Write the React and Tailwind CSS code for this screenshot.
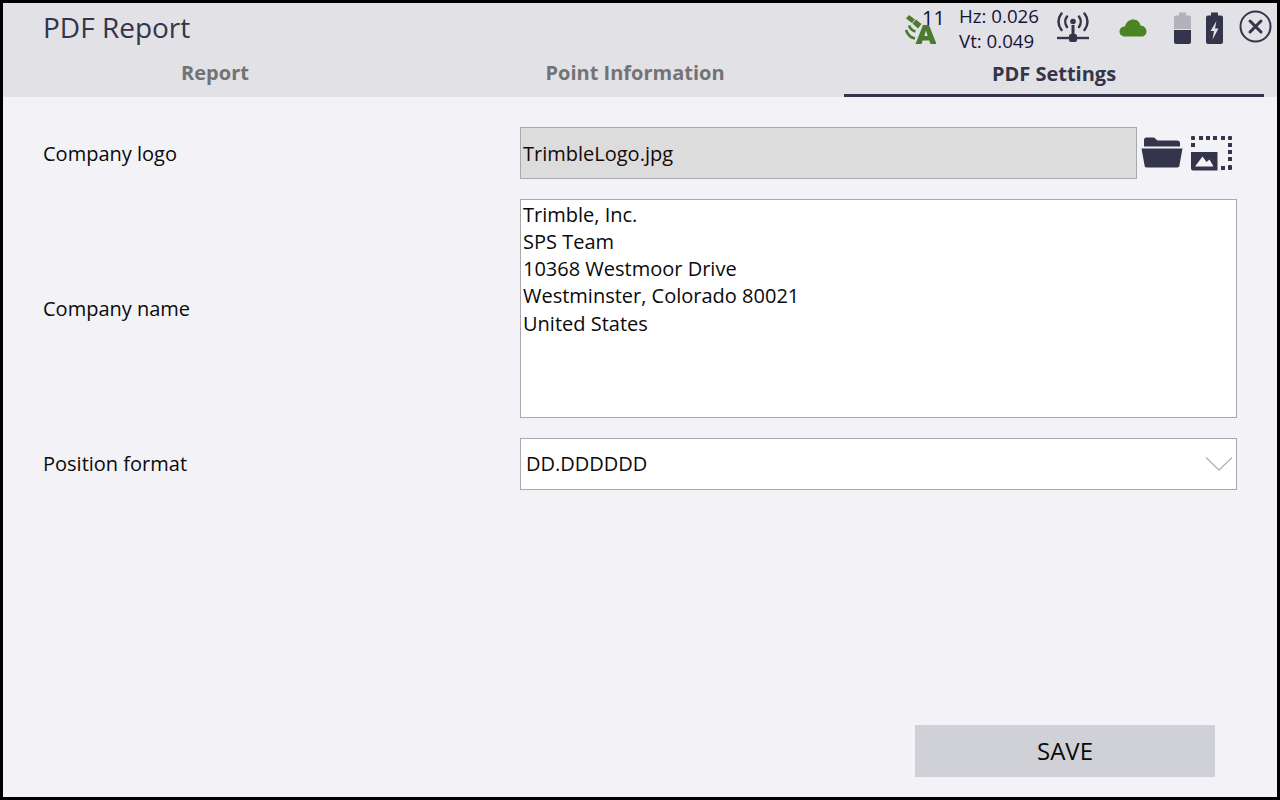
import React from "react";

const SatIcon = () => (
  <svg width="32" height="32" viewBox="0 0 32 32" fill="none">
    <g fill="#4d7a30">
      <path d="M2 5.500 L5 2 L11 6.500 L8 10 Z" />
      <path d="M8.500 10.500 L12 6.500 L17.500 11 L14 15.500 Z" />
      <path fillRule="evenodd" d="M19 12 h6 L32.500 31 h-6 l-1.200 -3.500 h-6.600 L17.500 31 h-6 Z M20.300 23 h3.400 l-1.700 -5.500 Z" />
    </g>
    <path d="M5 12.500 C6 15.500 8 17.500 11.500 18.500" stroke="#4d7a30" strokeWidth="2.600" />
    <path d="M2 17 C3.500 21.500 6.500 24.500 11 25.500" stroke="#4d7a30" strokeWidth="2.600" />
  </svg>
);

const RadioIcon = () => (
  <svg width="34" height="32" viewBox="0 0 34 32" fill="none" stroke="#34344a" strokeWidth="2.500" strokeLinecap="round">
    <circle cx="17" cy="9.500" r="2.800" fill="#34344a" stroke="none" />
    <path d="M11 4.500 C8.800 7.500 8.800 12 11 15" />
    <path d="M23 4.500 C25.200 7.500 25.200 12 23 15" />
    <path d="M5.500 1.500 C1.500 6.500 1.500 13 5.500 18" />
    <path d="M28.500 1.500 C32.500 6.500 32.500 13 28.500 18" />
    <path d="M17 13 V24" strokeWidth="3" strokeLinecap="butt" />
    <path d="M1 26 H33" strokeWidth="2.400" strokeLinecap="butt" />
    <rect x="13" y="22" width="8" height="8" rx="2" fill="#34344a" stroke="none" />
  </svg>
);

const CloudIcon = () => (
  <svg width="28" height="18" viewBox="0 0 28 18">
    <path d="M6 17.500 C2.500 17.500 0.500 15 0.500 12.500 C0.500 9.500 3 7.500 6 7.500 C7 3 10.500 0.500 14.500 0.500 C18.500 0.500 21 3.500 21.500 6.500 C25 6.500 27.500 9.500 27.500 12.500 C27.500 15.500 25 17.500 22.500 17.500 Z" fill="#4a8521" />
  </svg>
);

const BatteryIcon = () => (
  <svg width="17" height="32" viewBox="0 0 17 32">
    <path d="M5 0.500 h7 v3 h3 a2 2 0 0 1 2 2 V17 H0 V5.500 a2 2 0 0 1 2 -2 h3 Z" fill="#b2b2b8" />
    <path d="M0 18 h17 v12 a2 2 0 0 1 -2 2 H2 a2 2 0 0 1 -2 -2 Z" fill="#34344a" />
  </svg>
);

const ChargingIcon = () => (
  <svg width="17" height="32" viewBox="0 0 17 32">
    <path fillRule="evenodd" d="M5 0.500 h7 v3 h3 a2 2 0 0 1 2 2 V30 a2 2 0 0 1 -2 2 H2 a2 2 0 0 1 -2 -2 V5.500 a2 2 0 0 1 2 -2 h3 Z M10.500 9 L4.500 19 H8 L6.500 27.500 L12.500 16.500 H9 Z" fill="#34344a" />
  </svg>
);

const CloseIcon = () => (
  <svg width="33" height="33" viewBox="0 0 33 33" fill="none" stroke="#34344a">
    <circle cx="16.500" cy="16.500" r="15" strokeWidth="2" />
    <path d="M11 11 L22 22 M22 11 L11 22" strokeWidth="3" strokeLinecap="round" />
  </svg>
);

const FolderIcon = () => (
  <svg width="42" height="31" viewBox="0 0 42 31">
    <path d="M3 9.500 V3 a2.500 2.500 0 0 1 2.500 -2.500 H13 L16.500 3.500 H36 a3 3 0 0 1 3 3 V9.500 Z" fill="#34344a" />
    <path d="M0.500 11.500 H41.500 L38.500 28 a2.500 2.500 0 0 1 -2.500 2.500 H6 a2.500 2.500 0 0 1 -2.500 -2.500 Z" fill="#34344a" />
  </svg>
);

const ImageSelectIcon = () => (
  <svg width="43" height="36" viewBox="0 0 43 36">
    <g fill="#34344a">
      <rect x="1" y="1" width="4" height="4" rx="1" />
      <rect x="9" y="1" width="4" height="4" />
      <rect x="16" y="1" width="4" height="4" />
      <rect x="23" y="1" width="4" height="4" />
      <rect x="31" y="1" width="4" height="4" />
      <rect x="38" y="1" width="4" height="4" rx="1" />
      <rect x="1" y="8" width="4" height="4" />
      <rect x="38" y="8" width="4" height="4" />
      <rect x="38" y="15" width="4" height="4" />
      <rect x="38" y="22" width="4" height="4" />
      <rect x="31" y="31" width="4" height="4" />
      <rect x="38" y="30" width="4" height="5" rx="1" />
      <path fillRule="evenodd" d="M1 17 H27.500 V35.500 H3 a2 2 0 0 1 -2 -2 Z M5 31.500 H23.500 L19.500 24.500 L16.500 27 L12.500 21.500 Z" />
    </g>
  </svg>
);

const Tab = ({ label, active }) => (
  <div className={`w-[420px] h-[36px] flex items-center justify-center text-[20px] font-bold ${active ? "text-[#34344a] border-b-[3px] border-[#34344a] pb-[7px]" : "text-[#737376] pb-[12px] pl-[2px]"}`}>
    {label}
  </div>
);

const Label = ({ children, shift }) => (
  <div className={`w-[517px] shrink-0 text-[20px] text-[#0a0a0a] pl-[40px] ${shift ? "pt-[2px]" : ""}`}>{children}</div>
);

export default function App() {
  return (
    <div
      className="w-[1280px] h-[800px] border-[3px] border-black bg-[#f2f2f7] flex flex-col overflow-hidden"
      style={{ fontFamily: '"Open Sans", "Noto Sans", sans-serif' }}
    >
      <header className="h-[94px] shrink-0 bg-[#e1e1e6] flex flex-col">
        <div className="h-[47px] flex items-center">
          <h1 className="text-[28px] leading-[47px] text-[#34344a] pl-[40px] pt-[2px] font-normal">PDF Report</h1>
          <div className="ml-auto flex items-center h-full">
            <div className="relative w-[32px] h-[32px] mr-[23px] mt-[4px]">
              <SatIcon />
              <span className="absolute left-[18px] top-[-9px] text-[20px] leading-[27px] text-[#0f1030]">11</span>
            </div>
            <div className="w-[97px] text-[18.700px] leading-[25px] text-[#14143a] pt-[2px]">
              <div>Hz: 0.026</div>
              <div>Vt: 0.049</div>
            </div>
            <div className="mr-[29px] mt-[2px]"><RadioIcon /></div>
            <div className="mr-[27px] mt-[3px]"><CloudIcon /></div>
            <div className="mr-[15px] mt-[2px]"><BatteryIcon /></div>
            <div className="mr-[16px] mt-[2px]"><ChargingIcon /></div>
            <div className="mr-[5px]"><CloseIcon /></div>
          </div>
        </div>
        <div className="flex pl-[1px] mt-auto">
          <Tab label="Report" />
          <Tab label="Point Information" />
          <Tab label="PDF Settings" active />
        </div>
      </header>

      <main className="flex-1 flex flex-col pt-[30px]">
        <div className="flex items-center h-[52px]">
          <Label shift>Company logo</Label>
          <div className="w-[617px] h-[52px] shrink-0 bg-[#dcdcdc] border border-[#a9a9ab] flex items-center pl-[2px] pt-[2px] text-[20px] text-[#140a0a]">
            TrimbleLogo.jpg
          </div>
          <div className="ml-[4px] mt-[-1px]"><FolderIcon /></div>
          <div className="ml-[7px]"><ImageSelectIcon /></div>
        </div>

        <div className="flex items-center h-[219px] mt-[20px]">
          <Label>Company name</Label>
          <div className="w-[717px] h-[219px] shrink-0 bg-white border border-[#a9a9ab] pl-[2px] text-[20px] leading-[27.200px] text-[#0a0a0a] pt-[0.700px]">
            <div>Trimble, Inc.</div>
            <div>SPS Team</div>
            <div>10368 Westmoor Drive</div>
            <div>Westminster, Colorado 80021</div>
            <div>United States</div>
          </div>
        </div>

        <div className="flex items-center h-[52px] mt-[20px]">
          <Label>Position format</Label>
          <div className="w-[717px] h-[52px] shrink-0 bg-white border border-[#a9a9ab] pl-[5px] pr-[3px] flex items-center justify-between text-[20px] text-[#0a0a0a]">
            <span>DD.DDDDDD</span>
            <svg width="28" height="16" viewBox="0 0 28 16" fill="none" stroke="#b4b4b8" strokeWidth="1.300">
              <path d="M1 1.500 L14 14 L27 1.500" />
            </svg>
          </div>
        </div>

        <div className="mt-auto mb-[20px] flex justify-end pr-[62px]">
          <button className="w-[300px] h-[52px] bg-[#d0d1d6] text-[24px] text-[#0a0a0a]">SAVE</button>
        </div>
      </main>
    </div>
  );
}
